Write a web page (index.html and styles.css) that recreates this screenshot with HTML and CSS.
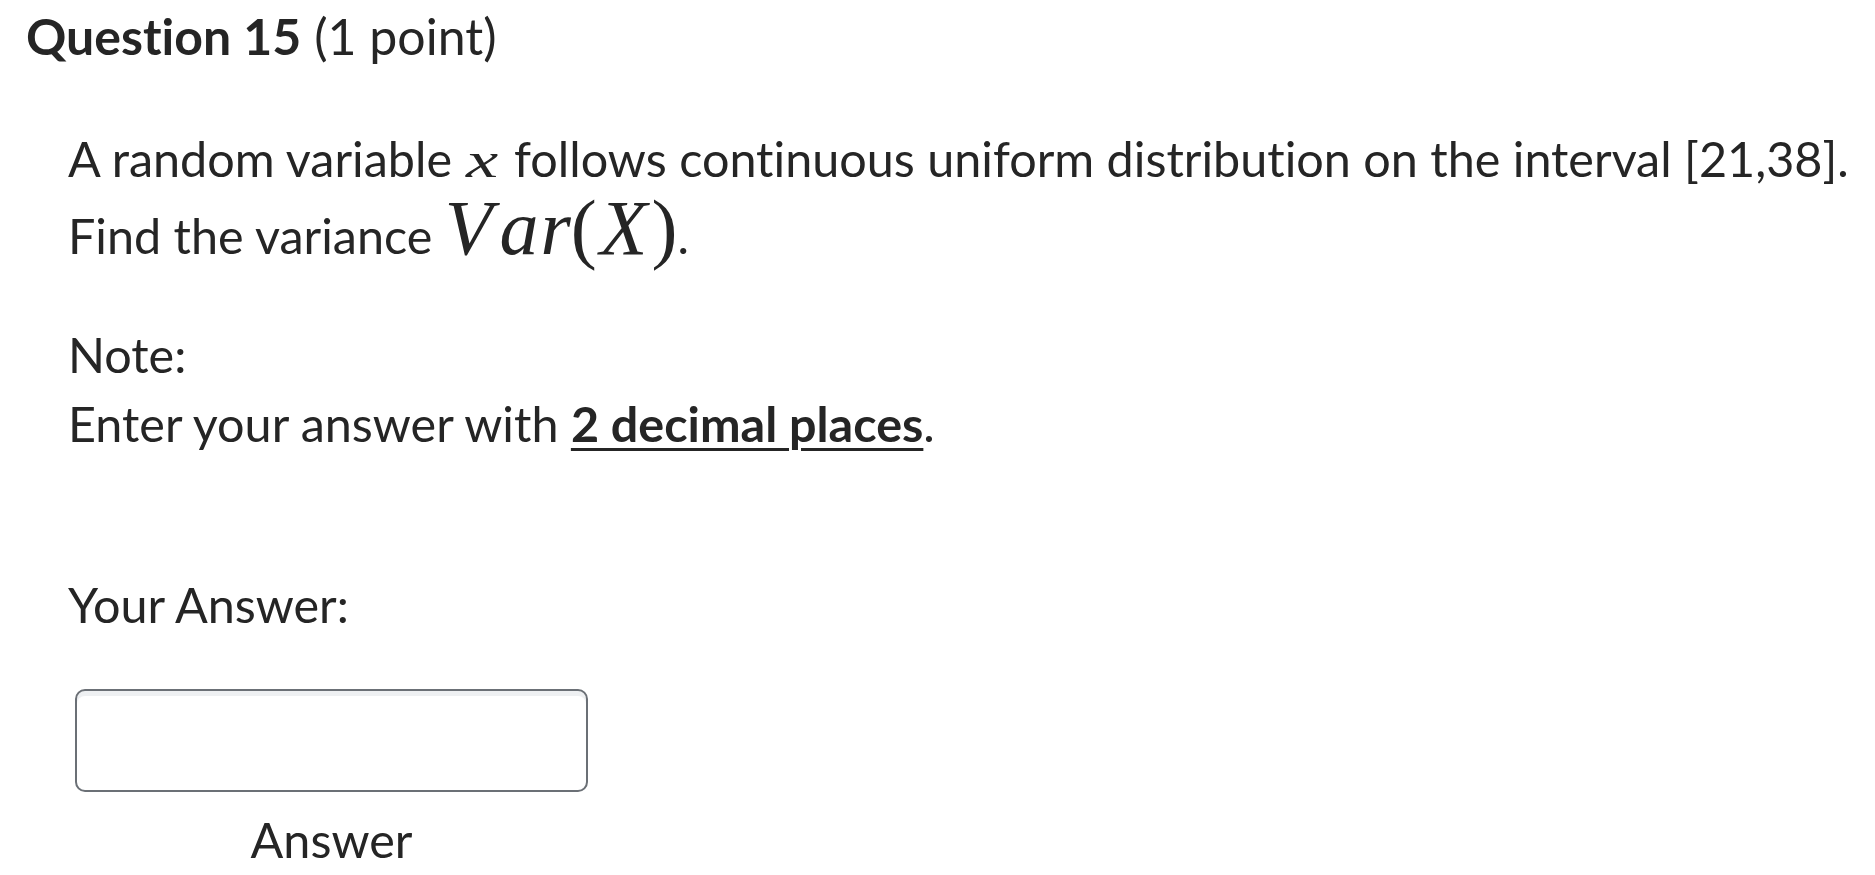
FILE: index.html
```html
<!DOCTYPE html>
<html lang="en">
<head>
<meta charset="utf-8">
<title>Question 15</title>
<link rel="stylesheet" href="styles.css">
</head>
<body>
<div class="question">
  <h2 class="q-title"><span class="q-num">Question 15</span> <span class="q-points">(1 point)</span></h2>
  <div class="q-body">
    <p class="para">A random variable <span class="math-x">x</span> follows continuous uniform distribution on the interval [21,38].<br>Find the variance <span class="math-big"><i>V</i><i class="a">a</i><i class="r">r</i><span class="paren">(</span><i class="X">X</i><span class="paren">)</span></span>.</p>
    <p class="para note">Note:<br>Enter your answer with <strong class="u">2 decimal places</strong>.</p>
    <div class="answer">
      <div class="answer-label">Your Answer:</div>
      <div class="answer-field">
        <div class="input-box"></div>
        <div class="input-caption">Answer</div>
      </div>
    </div>
  </div>
</div>
</body>
</html>
```
FILE: styles.css
```css
html, body {
  margin: 0;
  padding: 0;
  background: #ffffff;
}
body {
  font-family: Lato, "Open Sans", sans-serif;
  color: #252525;
  font-variant-ligatures: none;
}
.question {
  padding: 5px 0 0 26px;
}
.q-title {
  margin: 0;
  font-size: 50px;
  line-height: 62px;
  font-weight: 400;
}
.q-num {
  font-weight: 700;
}
.q-body {
  padding-left: 42px;
  padding-top: 57px;
  font-size: 48.5px;
  line-height: 69px;
}
.para {
  margin: 0;
}
.note {
  margin-top: 50px;
}
.math-x {
  display: inline-block;
  font-family: "Liberation Serif", "DejaVu Serif", serif;
  font-style: italic;
  font-size: 50px;
  line-height: 1;
  transform: scaleX(1.45);
  margin: 0 9px 0 6px;
}
.math-big {
  font-family: "Liberation Serif", "DejaVu Serif", serif;
  font-size: 78px;
  line-height: 70px;
}
.math-big i {
  font-style: italic;
}
.math-big .a {
  margin-left: 7px;
}
.math-big .r {
  margin-left: 2px;
}
.math-big .X {
  margin-left: 3px;
  margin-right: 4px;
}
.paren {
  font-style: normal;
}
.u {
  font-weight: 700;
  text-decoration: underline;
  text-decoration-thickness: 3px;
  text-underline-offset: 6px;
}
.answer {
  margin-top: 112px;
}
.answer-label {
  line-height: 69px;
}
.answer-field {
  display: flex;
  flex-direction: column;
  align-items: center;
  width: 513px;
  margin-left: 7px;
  margin-top: 50px;
}
.input-box {
  box-sizing: border-box;
  width: 513px;
  height: 103px;
  border: 2px solid #6b7076;
  border-radius: 10px;
  background: #ffffff;
  box-shadow: inset 0 5px 0 #eef0f2;
}
.input-caption {
  margin-top: 13px;
  line-height: 69px;
}
```
